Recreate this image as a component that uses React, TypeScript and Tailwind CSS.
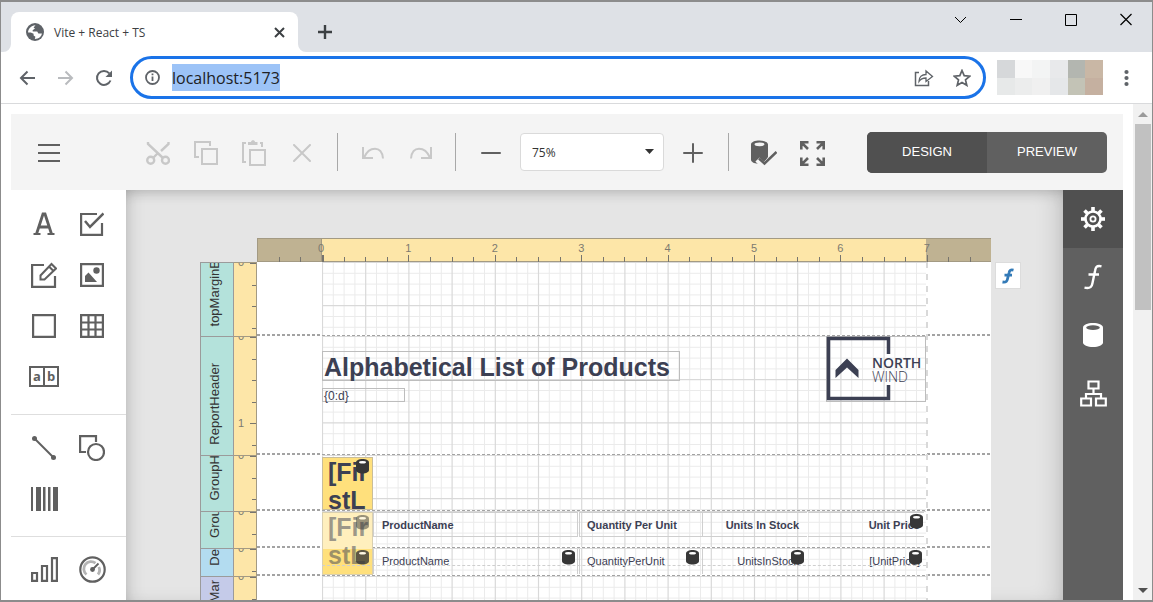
import React from "react";

type IconProps = { w?: number; h?: number; className?: string; sw?: number; children: React.ReactNode };

function Icon({ w = 24, h = 24, className = "", sw = 2, children }: IconProps) {
  return (
    <svg
      width={w}
      height={h}
      viewBox={`0 0 ${w} ${h}`}
      fill="none"
      stroke="currentColor"
      strokeWidth={sw}
      className={`shrink-0 ${className}`}
      aria-hidden="true"
    >
      {children}
    </svg>
  );
}

const INCH = 86.4;
const MARGIN = 65;
const GRID_WIDTH = 604;

/* ---------- Browser chrome ---------- */

function TabStrip() {
  return (
    <div className="flex h-[50px] shrink-0 items-end bg-[#dee1e6] pl-[10px] text-[#3c4043]">
      <div className="relative flex h-10 w-[287px] items-center rounded-t-lg bg-white pr-3 pl-[15px]">
        <svg width="8" height="8" viewBox="0 0 8 8" className="absolute bottom-0 -left-2" aria-hidden="true">
          <path d="M8 0V8H0A8 8 0 0 0 8 0Z" fill="#fff" />
        </svg>
        <svg width="8" height="8" viewBox="0 0 8 8" className="absolute -right-2 bottom-0" aria-hidden="true">
          <path d="M0 0V8H8A8 8 0 0 1 0 0Z" fill="#fff" />
        </svg>
        <svg width="18" height="18" viewBox="0 0 18 18" aria-hidden="true">
          <circle cx="9" cy="9" r="9" fill="#5f6368" />
          <path
            d="M9.500 2.200L7.600 4.400L9 5.600L6.600 7.200L6.800 8.600H11.200L12.400 10.400H15.900C15.600 12.600 14 14.800 11.600 15.600L8.800 15.900L9.400 13.800L7.600 12.600V10.800L4.800 9.400H2.100C2 6.200 5 2.400 9.500 2.200Z"
            fill="#fff"
          />
        </svg>
        <span className="ml-[10px] pt-0.5 text-xs">Vite + React + TS</span>
        <button type="button" aria-label="Close tab" className="ml-auto">
          <Icon w={13} h={13}>
            <path d="M2 2L11 11M11 2L2 11" />
          </Icon>
        </button>
      </div>
      <button type="button" aria-label="New tab" className="mb-3 ml-[19px]">
        <Icon w={16} h={16} sw={2.4}>
          <path d="M8 1V15M1 8H15" />
        </Icon>
      </button>
      <div className="mb-[26px] ml-auto flex items-center gap-[43px] pr-5 text-black">
        <button type="button" aria-label="Search tabs">
          <Icon w={13} h={13} sw={1}>
            <path d="M1 4L6.5 9.5L12 4" />
          </Icon>
        </button>
        <button type="button" aria-label="Minimize">
          <Icon w={12} h={13} sw={1}>
            <path d="M0 6.5H12" />
          </Icon>
        </button>
        <button type="button" aria-label="Maximize">
          <Icon w={12} h={13} sw={1}>
            <path d="M0.5 1.500H11.5V12.500H0.5Z" />
          </Icon>
        </button>
        <button type="button" aria-label="Close">
          <Icon w={12} h={13} sw={1.2}>
            <path d="M0.5 1L11.5 12M11.5 1L0.5 12" />
          </Icon>
        </button>
      </div>
    </div>
  );
}

const swatches = [
  "bg-[#d6d8da]", "bg-[#f8f8f8]", "bg-[#f3f4f4]", "bg-[#e8e9eb]", "bg-[#b3b6b0]", "bg-[#c9b7a5]",
  "bg-[#e7e9e9]", "bg-[#eceded]", "bg-[#f0f0f0]", "bg-[#e5e7e9]", "bg-[#c3c3b6]", "bg-[#c5b0a0]",
];

function AddressBar() {
  return (
    <div className="flex h-[52px] shrink-0 items-center border-b border-[#d9dadc] bg-white pr-[23px] pl-[18px] text-[#5f6368]">
      <button type="button" aria-label="Back">
        <Icon w={16} h={16}>
          <path d="M16 8H2M8.500 1.500L2 8L8.500 14.500" />
        </Icon>
      </button>
      <button type="button" aria-label="Forward" className="ml-[23px] text-[#b9bbbe]">
        <Icon w={16} h={16}>
          <path d="M0 8H14M7.500 1.500L14 8L7.500 14.500" />
        </Icon>
      </button>
      <button type="button" aria-label="Reload" className="ml-[21px]">
        <Icon w={18} h={18}>
          <path d="M15.500 11.500A7 7 0 1 1 14.300 4.300" />
          <path d="M17 1.500V8H10.500Z" fill="currentColor" stroke="none" />
        </Icon>
      </button>
      <div className="ml-[17px] flex h-[43px] flex-1 items-center rounded-full border-[3px] border-[#1a73e8] px-3">
        <Icon w={15} h={15}>
          <circle cx="7.500" cy="7.500" r="6.500" strokeWidth="1.800" />
          <path d="M7.500 6.500V11M7.500 3.500V5.200" strokeWidth="1.800" />
        </Icon>
        <input
          aria-label="Address"
          readOnly
          value="localhost:5173"
          className="ml-3 field-sizing-content h-[27px] bg-[#9cc3f7] text-base text-[#202124] outline-none"
        />
        <button type="button" aria-label="Share" className="ml-auto">
          <Icon w={20} h={18} sw={1}>
            <path d="M5 3.500H1.500V16.500H14.500V12" strokeWidth="1.500" />
            <path d="M5 12.500C5 8 8 5.500 12 5.500V2L18.500 7.500L12 12.500V9C9 9 6.500 10 5 12.500Z" strokeWidth="1.300" />
          </Icon>
        </button>
        <button type="button" aria-label="Bookmark" className="ml-[19px]">
          <Icon w={18} h={18} sw={1.7}>
            <path d="M9 1.500L11.200 6.700L16.800 7.200L12.500 10.900L13.800 16.300L9 13.400L4.200 16.300L5.500 10.900L1.200 7.200L6.800 6.700Z" />
          </Icon>
        </button>
      </div>
      <div className="ml-[11px] grid h-[35px] w-[106px] grid-cols-6 grid-rows-2">
        {swatches.map((c, i) => (
          <span key={i} className={c} />
        ))}
      </div>
      <button type="button" aria-label="Menu" className="ml-[21px]">
        <Icon w={5} h={18}>
          <g fill="currentColor" stroke="none">
            <circle cx="2.500" cy="3" r="2.100" />
            <circle cx="2.500" cy="9" r="2.100" />
            <circle cx="2.500" cy="15" r="2.100" />
          </g>
        </Icon>
      </button>
    </div>
  );
}

/* ---------- Designer toolbar ---------- */

function Tool({ label, muted, children }: { label: string; muted?: boolean; children: React.ReactNode }) {
  return (
    <button
      type="button"
      aria-label={label}
      className={`flex h-12 w-12 shrink-0 items-center justify-center pt-0.5 ${muted ? "text-[#c8c8c8]" : "text-[#606060]"}`}
    >
      {children}
    </button>
  );
}

function Separator() {
  return <span className="mx-[11px] h-[38px] w-px shrink-0 bg-[#a8a8a8]" />;
}

function Toolbar() {
  return (
    <div className="flex h-[76px] shrink-0 items-center bg-[#f4f4f4] pr-4 pl-[14px]">
      <Tool label="Menu">
        <Icon>
          <path d="M1 4H23M1 12H23M1 20H23" />
        </Icon>
      </Tool>
      <div className="ml-[61px] flex items-center">
        <Tool label="Cut" muted>
          <Icon sw={2.4}>
            <path d="M2 1V3L17 17M22.500 1V3L15 10M11.500 12.500L7 17" />
            <circle cx="4.700" cy="19.300" r="3.500" />
            <circle cx="19.500" cy="19.300" r="3.500" />
          </Icon>
        </Tool>
        <Tool label="Copy" muted>
          <Icon>
            <path d="M5 16H1V1H16V5M8 8H23V23H8Z" />
          </Icon>
        </Tool>
        <Tool label="Paste" muted>
          <Icon w={26} h={26}>
            <path d="M5 22H2V3H5M19 3H21V7M9 10H24V25H9Z" />
            <path d="M7 2H10C10 -0.500 14 -0.500 14 2H16.500V5H7Z" fill="currentColor" stroke="none" />
          </Icon>
        </Tool>
        <Tool label="Delete" muted>
          <Icon w={18} h={18}>
            <path d="M1 1L17 17M17 1L1 17" strokeLinecap="round" />
          </Icon>
        </Tool>
      </div>
      <Separator />
      <div className="flex w-[95px] shrink-0">
        <Tool label="Undo" muted>
          <Icon w={22} h={12}>
            <path d="M1 0V11H11M2 10.500C7 -1 20 -2 21 11.500" />
          </Icon>
        </Tool>
        <Tool label="Redo" muted>
          <Icon w={22} h={12}>
            <path d="M21 0V11H11M20 10.500C15 -1 2 -2 1 11.500" />
          </Icon>
        </Tool>
      </div>
      <Separator />
      <Tool label="Zoom out">
        <Icon w={20} h={20}>
          <path d="M1 10H19" strokeLinecap="round" />
        </Icon>
      </Tool>
      <div className="relative mx-[5px] shrink-0">
        <select
          aria-label="Zoom"
          defaultValue="75"
          className="block h-[38px] w-36 appearance-none rounded-[4px] border border-[#dadada] bg-white pt-px pl-[11px] text-xs text-[#333]"
        >
          <option value="75">75%</option>
          <option value="100">100%</option>
        </select>
        <svg width="9" height="5" viewBox="0 0 9 5" className="pointer-events-none absolute top-4 right-[10px]" aria-hidden="true">
          <path d="M0 0H9L4.500 5Z" fill="#333" />
        </svg>
      </div>
      <Tool label="Zoom in">
        <Icon w={20} h={20}>
          <path d="M1 10H19M10 1V19" strokeLinecap="round" />
        </Icon>
      </Tool>
      <Separator />
      <Tool label="Validate bindings">
        <Icon w={26} h={26}>
          <path
            d="M8.500 0.500C4 0.500 0 2 0 4.500V19.500C0 22 3 23.400 7 23.800L9 18.500L13.500 22L17 17V4.500C17 2 13 0.500 8.500 0.500Z"
            fill="currentColor"
            stroke="none"
          />
          <ellipse cx="8.500" cy="4.300" rx="5" ry="1.900" fill="#f4f4f4" stroke="none" />
          <path d="M6.500 19.500L13 26L26 13" stroke="#f4f4f4" strokeWidth="6" />
          <path d="M8 18.500L13.500 23.500L25.500 12" strokeWidth="2.500" />
        </Icon>
      </Tool>
      <Tool label="Full screen">
        <Icon w={25} h={25}>
          <path
            d="M1.300 8.500V1.300H8.500M1.300 1.300L8 8M16.500 1.300H23.700V8.500M23.700 1.300L17 8M1.300 16.500V23.700H8.500M1.300 23.700L8 17M16.500 23.700H23.700V16.500M23.700 23.700L17 17"
            strokeWidth="2.600"
          />
        </Icon>
      </Tool>
      <div className="ml-auto flex h-[41px] shrink-0 overflow-hidden rounded-[5px] bg-[#606060] font-['Liberation_Sans',sans-serif] text-[13px] text-white">
        <button type="button" className="w-[120px] bg-[#505050] pb-px">
          DESIGN
        </button>
        <button type="button" className="w-[120px] pb-px">
          PREVIEW
        </button>
      </div>
    </div>
  );
}

/* ---------- Toolbox ---------- */

const toolbox: { label: string; icon: React.ReactNode }[][] = [
  [
    {
      label: "Label",
      icon: (
        <Icon w={22} h={24}>
          <path d="M3.500 22L10 2H12L18.500 22M6 15H16" strokeWidth="2.800" />
          <path d="M0.500 22H7.500M14.500 22H21.500" />
        </Icon>
      ),
    },
    {
      label: "Check box",
      icon: (
        <Icon sw={2.2}>
          <path d="M17 2H1.100V22.900H22V11" />
          <path d="M5 9L10 15L23.500 1.500" strokeWidth="2.500" />
        </Icon>
      ),
    },
    {
      label: "Rich text",
      icon: (
        <Icon w={26} h={26} sw={2.2}>
          <path d="M13 3H1.100V24.900H24V14" />
          <path d="M9.500 17.500V13.500L20.500 2L25 6.500L13.500 17.500ZM18 4.500L22.500 9" strokeWidth="2" />
        </Icon>
      ),
    },
    {
      label: "Picture",
      icon: (
        <Icon sw={2.2}>
          <path d="M1.100 1.100H22.900V22.900H1.100Z" />
          <path d="M5 19V13L8.500 9.500L17 19Z" fill="currentColor" stroke="none" />
          <circle cx="16.500" cy="7.500" r="3.200" fill="currentColor" stroke="none" />
        </Icon>
      ),
    },
    {
      label: "Panel",
      icon: (
        <Icon sw={2.2}>
          <path d="M1.100 1.100H22.900V22.900H1.100Z" />
        </Icon>
      ),
    },
    {
      label: "Table",
      icon: (
        <Icon sw={2.2}>
          <path d="M1.100 1.100H22.900V22.900H1.100ZM8.500 1V23M15.500 1V23M1 8.500H23M1 15.500H23" />
        </Icon>
      ),
    },
    {
      label: "Character comb",
      icon: (
        <Icon w={30} h={22}>
          <path d="M1 1H29V20H1ZM15 1V20" />
          <text x="4" y="15" fontSize="13" fontWeight="700" fill="currentColor" stroke="none">
            a
          </text>
          <text x="18" y="15" fontSize="13" fontWeight="700" fill="currentColor" stroke="none">
            b
          </text>
        </Icon>
      ),
    },
  ],
  [
    {
      label: "Line",
      icon: (
        <Icon>
          <path d="M2.500 2.500L21.500 21.500" />
          <circle cx="2.500" cy="2.500" r="2.500" fill="currentColor" stroke="none" />
          <circle cx="21.500" cy="21.500" r="2.500" fill="currentColor" stroke="none" />
        </Icon>
      ),
    },
    {
      label: "Shape",
      icon: (
        <Icon w={26} h={26} sw={2.2}>
          <path d="M7 17H1.100V1.100H17V7" />
          <circle cx="17" cy="17" r="8" />
        </Icon>
      ),
    },
    {
      label: "Bar code",
      icon: (
        <Icon w={27} h={24}>
          <path
            d="M0 0H2V24H0ZM5 0H10V24H5ZM12 0H14.500V24H12ZM17 0H19.500V24H17ZM22 0H27V24H22Z"
            fill="currentColor"
            stroke="none"
          />
        </Icon>
      ),
    },
  ],
  [
    {
      label: "Chart",
      icon: (
        <Icon w={27} h={25} sw={2.2}>
          <path d="M1.100 16H6V23.900H1.100ZM11 9H16V23.900H11ZM21 1.100H25.900V23.900H21Z" />
        </Icon>
      ),
    },
    {
      label: "Gauge",
      icon: (
        <Icon w={27} h={27} sw={2.2}>
          <circle cx="13.500" cy="13.500" r="12.200" />
          <path d="M7.500 18.500A7 7 0 0 1 16.500 7.200M19.800 11A7 7 0 0 1 19 18.500" stroke="#b4b4b4" strokeWidth="2.800" />
          <circle cx="13.500" cy="13.500" r="2.400" fill="currentColor" stroke="none" />
          <path d="M13.500 13.500L19.500 7.500" strokeWidth="1.800" />
        </Icon>
      ),
    },
  ],
];

function Toolbox() {
  return (
    <aside className="w-[115px] shrink-0 bg-white pt-px text-[#606060]">
      {toolbox.map((group, i) => (
        <div key={i} className="grid grid-cols-[48px_48px] border-b border-[#dedede] px-[9px] pt-[7px] pb-3">
          {group.map((item) => (
            <button
              key={item.label}
              type="button"
              aria-label={item.label}
              className="flex h-[51px] items-center justify-center"
            >
              {item.icon}
            </button>
          ))}
        </div>
      ))}
    </aside>
  );
}

/* ---------- Report surface ---------- */

function HorizontalRuler() {
  const ticks: number[] = [];
  for (let i = -2; i <= 30; i++) ticks.push(i);
  return (
    <div className="relative ml-[57px] flex h-6 w-[734px] border-t border-b border-[#a39a83] bg-[#fde6a8]">
      <span className="w-[65px] border-x border-[#a39a83] bg-[#bfb292]" />
      <span className="flex-1" />
      <span className="w-[65px] bg-[#bfb292]" />
      <svg width="734" height="24" viewBox="0 0 734 24" className="absolute -top-px left-0" aria-hidden="true">
        {ticks.map((i) => (
          <rect
            key={i}
            x={Math.round(MARGIN + (i * INCH) / 4)}
            y={i % 4 === 0 ? 17 : 19}
            width={i === 0 ? 2 : 1}
            height={i % 4 === 0 ? 7 : 5}
            fill="#77756e"
          />
        ))}
        {[0, 1, 2, 3, 4, 5, 6, 7].map((n) => (
          <text
            key={n}
            x={n ? MARGIN + n * INCH : MARGIN - 1}
            y="14"
            textAnchor="middle"
            fontSize="11"
            fontFamily="Liberation Sans, sans-serif"
            fill="#7c7a70"
          >
            {n}
          </text>
        ))}
      </svg>
    </div>
  );
}

function BandGrid({ height }: { height: number }) {
  const cell = INCH / 8;
  const cols = Array.from({ length: Math.floor(GRID_WIDTH / cell) + 1 }, (_, i) => i);
  const rows = Array.from({ length: Math.floor(height / cell) + 1 }, (_, i) => i);
  return (
    <svg width={GRID_WIDTH + 1} height={height} viewBox={`0 0 ${GRID_WIDTH + 1} ${height}`} className="block" aria-hidden="true">
      {[false, true].map((major) => (
        <g key={String(major)} stroke={major ? "#d9d9d9" : "#ebebeb"} strokeWidth={major ? 1.2 : 1}>
          {cols
            .filter((i) => (i % 4 === 0) === major)
            .map((i) => (
              <line key={`c${i}`} x1={i * cell + 0.5} x2={i * cell + 0.5} y1={0} y2={height} />
            ))}
          {rows
            .filter((i) => (i % 4 === 0) === major)
            .map((i) => (
              <line key={`r${i}`} y1={i * cell + 0.5} y2={i * cell + 0.5} x1={0} x2={GRID_WIDTH} />
            ))}
        </g>
      ))}
    </svg>
  );
}

function VerticalRuler({ height }: { height: number }) {
  const ticks = Array.from({ length: Math.floor(height / (INCH / 4)) + 1 }, (_, i) => i);
  const numbers = height > INCH ? [0, 1] : [0];
  return (
    <svg width="22" height={height} viewBox={`0 0 22 ${height}`} className="block" aria-hidden="true">
      {ticks.map((i) => (
        <rect
          key={i}
          x={i % 4 === 0 ? 16 : 18}
          y={Math.round((i * INCH) / 4)}
          width={i % 4 === 0 ? 7 : 5}
          height="1"
          fill="#77756e"
        />
      ))}
      {numbers.map((n) => (
        <text
          key={n}
          x="7"
          y={n * INCH + (n ? 4 : 3)}
          textAnchor="middle"
          fontSize="11"
          fontFamily="Liberation Sans, sans-serif"
          fill="#7c7a70"
        >
          {n}
        </text>
      ))}
    </svg>
  );
}

const bands = [
  { name: "topMarginB", height: 74, color: "bg-[#b4e2db]" },
  { name: "ReportHeader", height: 119, color: "bg-[#b4e2db]" },
  { name: "GroupH", height: 56, color: "bg-[#b4e2db]" },
  { name: "Grou", height: 37, color: "bg-[#b4e2db]" },
  { name: "De", height: 28, color: "bg-[#b3dcf0]" },
  { name: "Mar", height: 36, color: "bg-[#c5cbe9]" },
];

const dashes = "bg-[repeating-linear-gradient(to_right,#a3a3a3_0_3px,transparent_3px_5px)]";

function Band({ name, height, color }: { name: string; height: number; color: string }) {
  return (
    <div className="flex overflow-hidden" style={{ height }}>
      <div
        className={`flex w-[34px] items-end justify-center overflow-hidden border-x border-t border-[#9b9b9b] pr-1 pb-[10px] text-[13px] text-[#333] ${color}`}
      >
        <span className="rotate-180 whitespace-nowrap [writing-mode:vertical-rl]">{name}</span>
      </div>
      <div className="w-[23px] border-t border-r border-[#a39a83] bg-[#fde6a8]">
        <VerticalRuler height={height} />
      </div>
      <div className="flex flex-1 items-end bg-white">
        <div className={`h-[2px] w-[65px] ${dashes}`} />
        <div className="flex h-full w-[605px] flex-col">
          <div className="min-h-0 flex-1 overflow-hidden">
            <BandGrid height={height} />
          </div>
          <div className={`h-px shrink-0 ${dashes}`} />
        </div>
        <div className={`h-[2px] flex-1 ${dashes}`} />
      </div>
    </div>
  );
}

function DataBadge({ className }: { className: string }) {
  return (
    <svg width="13" height="15" viewBox="0 0 13 15" className={`absolute ${className}`} aria-hidden="true">
      <path d="M6.500 0C3 0 0 1.500 0 3.500V11C0 13 3 14.500 6.500 14.500S13 13 13 11V3.500C13 1.500 10 0 6.500 0Z" fill="#373737" />
      <ellipse cx="6.500" cy="3.300" rx="3.500" ry="1.200" fill="#fff" />
    </svg>
  );
}

function Logo() {
  return (
    <div className="absolute top-[74px] left-[569px] h-[66px] w-[100px] border border-[#bdbdbd]">
      <svg
        width="98"
        height="64"
        viewBox="0 0 98 64"
        className="block overflow-visible font-['Open_Sans','Noto_Sans',sans-serif]"
        role="img"
        aria-label="Northwind logo"
      >
        <path d="M61.500 17V1.500H1.500V61.500H61.500V48" fill="none" stroke="#3c4053" strokeWidth="3.500" />
        <path d="M8.500 33L20 21.500L31.500 33V41L20 30.500L8.500 41Z" fill="#3c4053" />
        <text x="45" y="31" fontSize="14" fontWeight="600" fill="#3c4053">
          NORTH
        </text>
        <text x="45" y="45" fontSize="14" fontWeight="300" fill="#3c4053">
          WIND
        </text>
      </svg>
    </div>
  );
}

const cells = [
  { head: "ProductName", field: "ProductName", box: "left-[116px] w-[205px] border-x pl-2" },
  { head: "Quantity Per Unit", field: "QuantityPerUnit", box: "left-[322px] w-[124px] border-x pl-[7px]" },
  { head: "Units In Stock", field: "UnitsInStock", box: "left-[446px] w-[104px] justify-end pr-2" },
  { head: "Unit Price", field: "[UnitPrice]", box: "left-[551px] w-[116px] justify-end pr-1" },
];

function ReportControls() {
  return (
    <div className="absolute top-0 left-[57px] h-full w-[734px] text-[#3c4053]">
      <div className="absolute top-[89px] left-[65px] flex h-[30px] w-[358px] items-center border border-[#bdbdbd] pt-1 pl-px text-[25px] font-bold whitespace-nowrap">
        Alphabetical List of Products
      </div>
      <div className="absolute top-[126px] left-[65px] flex h-[14px] w-[83px] items-center border border-[#bdbdbd] pt-px pl-px text-xs">
        {"{0:d}"}
      </div>
      <Logo />

      <div className="absolute top-[195px] left-[65px] h-[53px] w-[51px] overflow-hidden border border-[#c9bd9a] bg-[#ffe07c] pl-[5px] text-[25px] leading-7 font-bold">
        [Fir
        <br />
        stL
      </div>
      <DataBadge className="top-[197px] left-[99px]" />

      <div className="absolute top-[250px] left-[65px] h-[63px] w-[51px] overflow-hidden border border-[#d9cfb0] bg-linear-to-b from-[#ffefbd] from-[36px] to-[#ffe07c] to-[36px] pl-[5px] text-[25px] leading-7 font-bold text-[#3c4053]/50">
        [Fir
        <br />
        stL
      </div>
      <DataBadge className="top-[253px] left-[99px] opacity-50" />
      <DataBadge className="top-[288px] left-[99px] opacity-80" />

      {cells.map((c) => (
        <React.Fragment key={c.head}>
          <div className={`absolute top-[250px] flex h-[25px] items-center border-y border-[#cfcfcf] pt-0.5 text-[11px] font-bold whitespace-nowrap ${c.box}`}>
            {c.head}
          </div>
          <div className={`absolute top-[287px] flex h-[25px] items-center border-[#cfcfcf] text-[11px] whitespace-nowrap ${c.box}`}>
            {c.field}
          </div>
        </React.Fragment>
      ))}
      <div className="absolute top-[303px] left-[65px] w-[604px] border-t border-dashed border-[#cfcfcf]" />
      <DataBadge className="top-[252px] left-[653px]" />
      <DataBadge className="top-[288px] left-[305px]" />
      <DataBadge className="top-[288px] left-[429px]" />
      <DataBadge className="top-[288px] left-[534px]" />
      <DataBadge className="top-[288px] left-[652px]" />

      <svg width="2" height="350" viewBox="0 0 2 350" className="absolute top-0 left-[669px]" aria-hidden="true">
        <path d="M1 0V350" stroke="#d9d9d9" strokeWidth="2" strokeDasharray="6 6" />
      </svg>
    </div>
  );
}

function DesignSurface() {
  return (
    <main className="min-w-0 flex-1 overflow-hidden bg-[#e5e5e5] pt-12 pl-[74px] font-['Liberation_Sans',sans-serif] shadow-[inset_0_8px_14px_-6px_rgba(0,0,0,0.18),inset_14px_0_18px_-12px_rgba(0,0,0,0.16),inset_-14px_0_24px_-10px_rgba(0,0,0,0.16)]">
      <div className="w-[791px]">
        <HorizontalRuler />
        <div className="relative">
          {bands.map((b) => (
            <Band key={b.name} {...b} />
          ))}
          <ReportControls />
          <button
            type="button"
            aria-label="Expression"
            className="absolute top-0 left-[795px] flex h-[27px] w-[26px] items-center justify-center border border-[#dcdcdc] bg-white text-[#337ab7]"
          >
            <Icon w={12} h={16} sw={2.8}>
              <path d="M11.500 2.200C8.500 1.400 7.500 2.500 7 5L5.500 11C5 13.500 4 14.600 0.500 14M2.500 7.200H10" />
            </Icon>
          </button>
        </div>
      </div>
    </main>
  );
}

/* ---------- Right bar ---------- */

function SideTab({ label, active, children }: { label: string; active?: boolean; children: React.ReactNode }) {
  return (
    <button
      type="button"
      aria-label={label}
      className={`flex h-[58px] w-full items-center justify-center ${active ? "bg-[#505050]" : ""}`}
    >
      {children}
    </button>
  );
}

const teeth = [0, 45, 90, 135, 180, 225, 270, 315];

function SideBar() {
  return (
    <nav className="w-[60px] shrink-0 bg-[#606060] text-white">
      <SideTab label="Properties" active>
        <Icon w={26} h={26}>
          <circle cx="13" cy="13" r="7.500" strokeWidth="2.600" />
          <circle cx="13" cy="13" r="2.600" strokeWidth="1.800" />
          {teeth.map((a) => (
            <path key={a} d="M13 1V5" strokeWidth="3.600" transform={`rotate(${a} 13 13)`} />
          ))}
        </Icon>
      </SideTab>
      <SideTab label="Expressions">
        <Icon w={18} h={26}>
          <path d="M17.500 2.300C12 1 11.500 4 11 7L8.500 19C8 22.500 6.500 25 0.500 23.700M4.500 10.500H15" strokeWidth="2.400" />
        </Icon>
      </SideTab>
      <SideTab label="Fields">
        <Icon w={20} h={24}>
          <path d="M10 0C4.500 0 0 1.800 0 4.500V19.500C0 22.200 4.500 24 10 24S20 22.200 20 19.500V4.500C20 1.800 15.500 0 10 0Z" fill="currentColor" stroke="none" />
          <ellipse cx="10" cy="4.600" rx="6.800" ry="2.300" fill="#606060" stroke="none" />
        </Icon>
      </SideTab>
      <SideTab label="Report explorer">
        <Icon w={27} h={27} sw={2.2}>
          <path d="M8.500 1.500H18.500V8.500H8.500ZM1.200 18.500H11V25.500H1.200ZM16 18.500H25.800V25.500H16ZM13.500 9V14M6 18.500V14H21V18.500" />
        </Icon>
      </SideTab>
    </nav>
  );
}

function ScrollBar() {
  return (
    <div className="flex w-[19px] shrink-0 flex-col items-center bg-[#f1f1f1]">
      <button type="button" aria-label="Scroll up" className="flex h-5 items-center">
        <svg width="10" height="5" viewBox="0 0 10 5" aria-hidden="true">
          <path d="M0 5L5 0L10 5Z" fill="#9a9a9a" />
        </svg>
      </button>
      <div className="h-[186px] w-4 bg-[#c1c1c1]" />
      <button type="button" aria-label="Scroll down" className="mt-auto flex h-5 items-center">
        <svg width="10" height="5" viewBox="0 0 10 5" aria-hidden="true">
          <path d="M0 0H10L5 5Z" fill="#505050" />
        </svg>
      </button>
    </div>
  );
}

export default function App() {
  return (
    <div className="flex h-screen flex-col overflow-hidden border-t-2 border-r border-b-2 border-l border-[#8c8c8c] bg-white font-['Open_Sans','Noto_Sans',sans-serif]">
      <TabStrip />
      <AddressBar />
      <div className="flex min-h-0 flex-1">
        <div className="mr-[10px] ml-[10px] flex min-w-0 flex-1 flex-col overflow-hidden pt-[10px]">
          <Toolbar />
          <div className="flex min-h-0 flex-1">
            <Toolbox />
            <DesignSurface />
            <SideBar />
          </div>
        </div>
        <ScrollBar />
      </div>
    </div>
  );
}
